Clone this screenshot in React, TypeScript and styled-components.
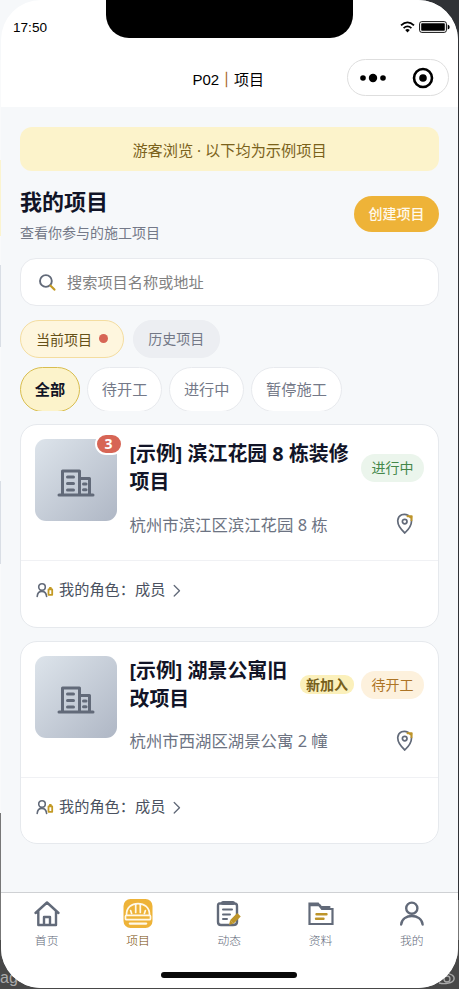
import React from "react";
import styled, { createGlobalStyle } from "styled-components";

const Global = createGlobalStyle`
  *{box-sizing:border-box}
  body{margin:0;overflow:hidden;font-family:"Noto Sans","Noto Sans CJK SC",sans-serif;color:#111427}
  button,input{font:inherit}
  svg{display:block;flex-shrink:0}
`;

const Desk = styled.div`
  position: relative;
  width: 459px;
  height: 989px;
  padding: 0 1.5px 1px 1px;
  overflow: hidden;
  background:
    linear-gradient(#f6f8fa, #f6f8fa) 0 0 / 60px 60px no-repeat,
    linear-gradient(90deg, transparent 1px, #303236 1px) 0 0 / 100% 900px no-repeat,
    linear-gradient(#f9fafb 0 160px, #fbf4cf 160px 236px, #f9fafb 236px 265px, #d9dee5 265px 347px, #f9fafb 347px 481px, #d9dee5 481px 564px, #f9fafb 564px 813px, #777 813px 940px, #484848 940px);
`;
const Under = styled.span`
  position: absolute;
  left: 0;
  bottom: 0;
  color: #aaa;
  font: 16px/22px "Liberation Sans", sans-serif;
`;
const UnderIcon = styled.svg`
  position: absolute;
  right: 3px;
  bottom: 3px;
`;
const Phone = styled.main`
  position: relative;
  width: 456.5px;
  height: 988px;
  display: flex;
  flex-direction: column;
  overflow: hidden;
  border-radius: 40px;
  background: #f6f8fa;
`;
const Header = styled.header`
  flex: none;
  height: 106.5px;
  background: #fff;
`;
const Status = styled.div`
  height: 54px;
  display: grid;
  grid-template-columns: 105px 247px 1fr;
`;
const Time = styled.span`
  padding: 19px 0 0 12px;
  font: 13.6px/17px "Liberation Sans", sans-serif;
  color: #000;
`;
const Notch = styled.div`
  height: 38px;
  border-radius: 0 0 23px 23px;
  background: #000;
`;
const Signals = styled.div`
  display: flex;
  gap: 4px;
  justify-content: flex-end;
  padding: 21px 8px 0 0;
`;
const Nav = styled.div`
  height: 52px;
  display: grid;
  grid-template-columns: 1fr auto 1fr;
  align-items: center;
  padding-right: 9px;
  padding-left: 7px;
`;
const NavTitle = styled.h1`
  grid-column: 2;
  margin: 0;
  font: 400 15px/22px "Liberation Sans", "Noto Sans CJK SC", sans-serif;
  color: #000;
  b { font-weight: 400; color: #a9621c; -webkit-text-stroke: .4px #a9621c; }
`;
const Capsule = styled.div`
  justify-self: end;
  width: 102px;
  height: 37px;
  margin-top: -5px;
  border: 1px solid #dedede;
  border-radius: 19px;
  display: flex;
  align-items: center;
  justify-content: space-between;
  padding: 0 14px 0 12px;
`;
const Body = styled.section`
  flex: 1;
  padding: 20.5px 18.5px 0 19px;
`;
const Notice = styled.div`
  height: 44px;
  border-radius: 12px;
  background: #fcf3cb;
  color: #7b621b;
  font-size: 15.2px;
  line-height: 46px;
  text-align: center;
`;
const Heading = styled.div`
  height: 86.5px;
  display: flex;
  justify-content: space-between;
`;
const Title = styled.h2`
  margin: 14px 0 0;
  font-size: 22px;
  line-height: 32px;
  font-weight: 700;
`;
const Subtitle = styled.p`
  margin: 6px 0 0;
  font-size: 14px;
  line-height: 20px;
  color: #747988;
`;
const Create = styled.button`
  width: 85px;
  height: 36px;
  margin-top: 24.5px;
  padding: 0 0 2px;
  border: 0;
  border-radius: 18px;
  background: #eeb338;
  color: #fff9ec;
  font-family: "Noto Sans CJK SC", sans-serif;
  font-size: 14px;
  font-weight: 500;
`;
const Search = styled.label`
  height: 48.5px;
  display: flex;
  align-items: center;
  gap: 11px;
  padding: 0 17px;
  border: 1px solid #e8eaee;
  border-radius: 16px;
  background: #fff;
  input {
    flex: 1;
    border: 0;
    outline: 0;
    padding: 0;
    background: none;
    font-size: 15.2px;
  }
  input::placeholder { color: #818181; opacity: 1; }
`;
const Tabs = styled.div`
  display: flex;
  gap: 9px;
  margin-top: 13.5px;
`;
const Tab = styled.button<{ $active?: boolean }>`
  width: ${p => (p.$active ? 104 : 86.5)}px;
  height: 38.5px;
  padding: 0 0 ${p => (p.$active ? 0 : 2)}px;
  display: flex;
  align-items: center;
  justify-content: center;
  gap: 7px;
  border: 1px solid ${p => (p.$active ? "#f4dda0" : "#eceef2")};
  border-radius: 20px;
  background: ${p => (p.$active ? "#fef6de" : "#eceef2")};
  color: ${p => (p.$active ? "#655018" : "#737887")};
  font-size: 14px;
`;
const Dot = styled.i`
  width: 9px;
  height: 9px;
  border-radius: 50%;
  background: #d76555;
`;
const Filters = styled.div`
  display: flex;
  gap: 7px;
  height: 44px;
  margin-top: 9px;
  overflow: hidden;
`;
const Chip = styled.button<{ $active?: boolean }>`
  flex: none;
  height: 45px;
  padding: 0 13.8px 3px;
  border: 1px solid ${p => (p.$active ? "#d8bd4e" : "#e8eaee")};
  border-radius: 23px;
  background: ${p => (p.$active ? "#fcf3cb" : "#fff")};
  color: ${p => (p.$active ? "#111427" : "#747988")};
  font-size: 15.2px;
  font-weight: ${p => (p.$active ? 700 : 400)};
`;
const Cards = styled.div`
  display: grid;
  gap: 13px;
  margin-top: 13px;
`;
const Card = styled.article`
  height: 203.5px;
  border: 1px solid #e6e9ed;
  border-radius: 17px;
  background: #fff;
`;
const CardTop = styled.div`
  height: 136px;
  padding: 14px 14px 0 13.5px;
  display: flex;
  gap: 13px;
  border-bottom: 1px solid #f0f1f4;
`;
const Thumb = styled.div`
  position: relative;
  flex: none;
  width: 82px;
  height: 82px;
  display: flex;
  align-items: center;
  justify-content: center;
  padding-top: 6px;
  border-radius: 11px;
  background: linear-gradient(135deg, #dde4eb, #afb7c5);
`;
const Badge = styled.b`
  position: absolute;
  right: -6px;
  top: -6px;
  width: 28px;
  height: 21.5px;
  border: 2px solid #fff;
  border-radius: 11px;
  background: #d76555;
  color: #fff;
  font-size: 14px;
  line-height: 17px;
  text-align: center;
`;
const Info = styled.div`
  flex: 1;
  min-width: 0;
  padding-top: 1px;
`;
const NameRow = styled.div`
  height: 56px;
  display: flex;
  align-items: center;
  gap: 7px;
`;
const Name = styled.h3`
  flex: 1;
  margin: 0;
  font-size: 19.9px;
  line-height: 28px;
  font-weight: 700;
  white-space: pre;
`;
const State = styled.span<{ $kind: "active" | "wait" }>`
  flex: none;
  width: 63px;
  height: 28px;
  border-radius: 14px;
  background: ${p => (p.$kind === "active" ? "#ebf5ec" : "#fdf1dd")};
  color: ${p => (p.$kind === "active" ? "#44874a" : "#ad7425")};
  font-size: 14px;
  line-height: 28px;
  text-align: center;
`;
const NewTag = styled.b`
  flex: none;
  width: 54px;
  height: 19px;
  margin-left: -1px;
  border-radius: 9px;
  background: #fbf0bb;
  color: #77601b;
  font-size: 14px;
  line-height: 19px;
  text-align: center;
`;
const Address = styled.div`
  height: 28px;
  margin-top: 14px;
  padding-right: 10px;
  display: flex;
  align-items: center;
  justify-content: space-between;
  color: #6c7382;
  font-size: 16.4px;
  span { margin-top: -1px; }
`;
const Role = styled.div`
  height: 59px;
  display: flex;
  align-items: center;
  padding-left: 15px;
  color: #4a5160;
  font-size: 15.2px;
  white-space: nowrap;
  span { margin: -5px 8px 0 5px; }
`;
const Footer = styled.footer`
  flex: none;
  height: 96px;
  display: flex;
  flex-direction: column;
  align-items: center;
  border-top: 1px solid #cfd1d4;
  background: #fff;
`;
const TabBar = styled.nav`
  width: 100%;
  height: 79px;
  display: grid;
  grid-template-columns: repeat(5, 1fr);
`;
const TabItem = styled.div<{ $active?: boolean }>`
  display: flex;
  flex-direction: column;
  align-items: center;
  padding-top: 6px;
  color: ${p => (p.$active ? "#744800" : "#626979")};
  font: 300 11.8px/20px "Noto Sans CJK SC", sans-serif;
  svg { margin-bottom: 2px; }
`;
const HomeBar = styled.div`
  width: 136px;
  height: 6px;
  border-radius: 3px;
  background: #090909;
`;

const line = {
  fill: "none",
  stroke: "#626a79",
  strokeLinecap: "round" as const,
  strokeLinejoin: "round" as const,
};

const Building = () => (
  <svg width="38" height="28" viewBox="0 0 38 28" {...line} strokeWidth="3">
    <path d="M2 26H36M5.5 26V2H22.5V26M22.5 9.5H32.5V26M10.5 8H16.5M10.5 14.5H16.5M10.5 21H16.5M26.5 15H29M26.5 20.7H29" />
  </svg>
);
const Pin = () => (
  <svg width="18" height="22" viewBox="0 0 18 22" {...line} strokeWidth="1.7">
    <path d="M15.4 7C16.1 12 13.1 16 8.8 20C4.3 16 1.3 12 1.8 7.2C2.5 1.5 8 .2 12 2.2" />
    <circle cx="8.7" cy="8.6" r="2.3" />
    <path d="M11.5 3.2H15.7L15.5 7.3M13 3L15.2 5" stroke="#bd942a" strokeWidth="2" />
  </svg>
);
const Person = () => (
  <svg width="18" height="17" viewBox="0 0 18 17" {...line} strokeWidth="1.6">
    <circle cx="6" cy="5" r="3.3" />
    <path d="M1.2 14.5C1.7 7.7 9.9 7.7 10.6 14.5" />
    <path d="M12.5 7.4H16.2V12.8H12.5ZM13.8 6.6V6H14.9V6.6" stroke="#c39a25" strokeWidth="1.8" />
  </svg>
);

const Home = () => (
  <svg width="28" height="29" viewBox="0 0 28 29" {...line} strokeWidth="2.4">
    <path d="M2.5 14L14 3.5L25.5 14M5.3 12V26H23V12M11 25.5V18H17V25.5" />
  </svg>
);
const Helmet = () => (
  <svg width="30" height="29" viewBox="0 0 30 29" fill="none" stroke="#fff9e9" strokeWidth="1.7" strokeLinecap="round">
    <rect x=".5" width="29" height="29" rx="7" fill="#eeb338" stroke="none" />
    <path d="M3.5 15.5C3.5 8.5 8.5 4.6 15 4.6S26.5 8.5 26.5 15.5" />
    <path d="M12.7 5.5V13.5M17.3 5.5V13.5M7.6 11.5L8.6 14.5M22.4 11.5L21.4 14.5" />
    <rect x="2.5" y="16.3" width="25" height="4.4" rx="1" />
    <path d="M6.8 24.6H23.2" strokeWidth="2.2" />
  </svg>
);
const Clipboard = () => (
  <svg width="28" height="29" viewBox="0 0 28 29" {...line} strokeWidth="2.4">
    <path d="M8 4.5H4.5Q3 4.5 3 7V23Q3 26 6 26H18Q22 26 22 23V7Q22 4.5 19.5 4.5H18" />
    <path d="M8 4H18" strokeWidth="4" />
    <path d="M8 10.5H17M8 15.5H15M8 20H12" strokeWidth="2" />
    <path d="M17 22.8L24 15.8" stroke="#bd942a" strokeWidth="5" strokeLinecap="butt" />
    <path d="M14 26L15.2 21L18.8 24.6Z" fill="#bd942a" stroke="none" />
  </svg>
);
const Folder = () => (
  <svg width="28" height="29" viewBox="0 0 28 29" {...line} strokeWidth="2.2" strokeLinejoin="miter">
    <path d="M2.5 25V4.5H11L15 10H25.5V25Z" />
    <path d="M3 6.2H12.5L14 8H22.5" />
    <path d="M9.5 15.3H19.5M9 19.7H16.5" stroke="#bd942a" strokeWidth="2.4" />
  </svg>
);
const User = () => (
  <svg width="28" height="29" viewBox="0 0 28 29" {...line} strokeWidth="2.4">
    <circle cx="13.8" cy="9.2" r="5.6" />
    <path d="M3.2 25.5C3.8 14.2 23.8 14.2 24.6 25.5" />
  </svg>
);

const projects = [
  { name: "[示例] 滨江花园 8 栋装修\n项目", address: "杭州市滨江区滨江花园 8 栋", state: "进行中", kind: "active" as const, count: 3, fresh: false },
  { name: "[示例] 湖景公寓旧\n改项目", address: "杭州市西湖区湖景公寓 2 幢", state: "待开工", kind: "wait" as const, count: 0, fresh: true },
];
const tabs = [
  { label: "首页", Icon: Home },
  { label: "项目", Icon: Helmet },
  { label: "动态", Icon: Clipboard },
  { label: "资料", Icon: Folder },
  { label: "我的", Icon: User },
];

export default function App() {
  return (
    <>
      <Global />
      <Desk>
        <Under>ag</Under>
        <UnderIcon width="20" height="14" viewBox="0 0 20 14" fill="none" stroke="#aaa" strokeWidth="1.3">
          <path d="M8 1.5C15 1 19 4 18 7.5C17 11 9 12.5 3 11" />
          <circle cx="11" cy="7" r="3" />
        </UnderIcon>
        <Phone>
          <Header>
            <Status>
              <Time>17:50</Time>
              <Notch />
              <Signals>
                <svg width="15" height="12" viewBox="0 0 15 12" fill="none" stroke="#000" strokeWidth="1.8">
                  <path d="M1 4.4Q7.5-1.6 14 4.4M3.6 7.1Q7.5 3.6 11.4 7.1" />
                  <path d="M5.2 9Q7.5 7.2 9.8 9L7.5 11.5Z" fill="#000" stroke="none" />
                </svg>
                <svg width="31" height="12" viewBox="0 0 31 12">
                  <rect x=".6" y=".6" width="26.8" height="10.8" rx="2.2" fill="none" stroke="#111" />
                  <rect x="2.2" y="2.2" width="23.6" height="7.6" rx=".8" />
                  <path d="M28.7 3.5Q30.7 4 30.7 6T28.7 8.5Z" />
                </svg>
              </Signals>
            </Status>
            <Nav>
              <NavTitle>P02<b>｜</b>项目</NavTitle>
              <Capsule>
                <svg width="27" height="10" viewBox="0 0 27 10">
                  <circle cx="3" cy="5" r="2.8" /><circle cx="13" cy="5" r="4.2" /><circle cx="23" cy="5" r="2.8" />
                </svg>
                <svg width="22" height="22" viewBox="0 0 22 22">
                  <circle cx="11" cy="11" r="9" fill="none" stroke="#000" strokeWidth="2.6" /><circle cx="11" cy="11" r="3.8" />
                </svg>
              </Capsule>
            </Nav>
          </Header>
          <Body>
            <Notice>游客浏览 · 以下均为示例项目</Notice>
            <Heading>
              <div><Title>我的项目</Title><Subtitle>查看你参与的施工项目</Subtitle></div>
              <Create>创建项目</Create>
            </Heading>
            <Search>
              <svg width="18" height="18" viewBox="0 0 18 18" fill="none" strokeWidth="1.9" strokeLinecap="round">
                <circle cx="7.9" cy="8" r="5.9" stroke="#626a79" /><path d="M12.6 12.7L16.4 16.6" stroke="#c39a25" strokeWidth="2.2" />
              </svg>
              <input placeholder="搜索项目名称或地址" />
            </Search>
            <Tabs><Tab $active>当前项目<Dot /></Tab><Tab>历史项目</Tab></Tabs>
            <Filters>
              <Chip $active>全部</Chip><Chip>待开工</Chip><Chip>进行中</Chip><Chip>暂停施工</Chip>
            </Filters>
            <Cards>
              {projects.map(p => (
                <Card key={p.name}>
                  <CardTop>
                    <Thumb><Building />{p.count > 0 && <Badge>{p.count}</Badge>}</Thumb>
                    <Info>
                      <NameRow><Name>{p.name}</Name>{p.fresh && <NewTag>新加入</NewTag>}<State $kind={p.kind}>{p.state}</State></NameRow>
                      <Address><span>{p.address}</span><Pin /></Address>
                    </Info>
                  </CardTop>
                  <Role>
                    <Person /><span>我的角色：成员</span>
                    <svg width="8" height="13" viewBox="0 0 8 13" {...line} strokeWidth="1.3"><path d="M1.2 1.5L6.5 6.7L1.2 12" /></svg>
                  </Role>
                </Card>
              ))}
            </Cards>
          </Body>
          <Footer>
            <TabBar>
              {tabs.map(({ label, Icon }) => <TabItem key={label} $active={label === "项目"}><Icon />{label}</TabItem>)}
            </TabBar>
            <HomeBar />
          </Footer>
        </Phone>
      </Desk>
    </>
  );
}
